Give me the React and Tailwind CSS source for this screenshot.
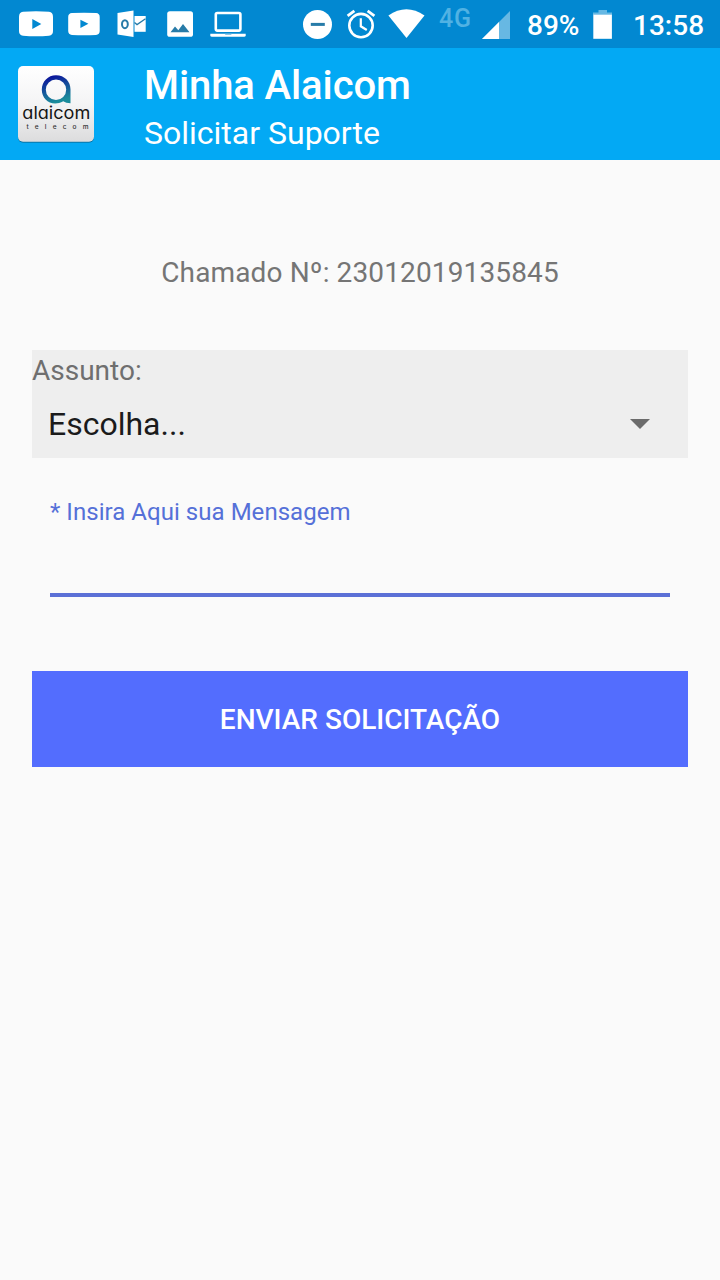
import { useState } from "react";

function StatusBar() {
  return (
    <div className="flex h-12 bg-[#0288d1] text-white">
      <svg className="ml-[18px] h-12 w-[36px]" viewBox="18 0 36 48" fill="currentColor">
        <path
          fillRule="evenodd"
          d="M23 11.8Q36 10.8 49 11.8Q53 12.2 53 17V31Q53 35.3 49 35.8Q36 36.8 23 35.8Q19 35.3 19 31V17Q19 12.2 23 11.8ZM32.3 19V29L41.3 24Z"
        />
      </svg>
      <svg className="ml-[13px] h-12 w-[34px]" viewBox="67 0 34 48" fill="currentColor">
        <path
          fillRule="evenodd"
          d="M72 13Q84 12.4 96 13Q99.7 13.3 99.7 17V31Q99.7 34.5 96 34.9Q84 35.5 72 34.9Q68.2 34.5 68.2 31V17Q68.2 13.3 72 13ZM80.4 19.7V28L88.4 23.8Z"
        />
      </svg>
      {/* outlook */}
      <svg className="ml-[15px] h-12 w-[32px]" viewBox="116 0 32 48">
        <path d="M117.5 13L133.5 10.6V37L117.5 34.6Z" fill="currentColor" />
        <path d="M134.5 16H145.7V31.8H134.5Z" fill="currentColor" />
        <path d="M134.5 22.6L137 24.6L145.5 18.8" fill="none" stroke="#277ba8" strokeWidth="1.3" />
        <ellipse cx="124.9" cy="24.2" rx="2.9" ry="4" fill="none" stroke="#277ba8" strokeWidth="2" />
      </svg>
      <svg className="ml-[18px] h-12 w-[28px]" viewBox="166 0 28 48">
        <rect x="167.2" y="11.2" width="25.8" height="25.6" rx="2.6" fill="currentColor" />
        <path d="M170.5 32.3L175 26.4L178.3 30.2L183 24L189.5 32.3Z" fill="#277ba8" />
      </svg>
      <svg className="ml-[15px] h-12 w-[38px]" viewBox="209 0 38 48">
        <rect x="215.8" y="13" width="24.6" height="17.6" rx="1.5" fill="none" stroke="currentColor" strokeWidth="2.6" />
        <path d="M210.3 33.8H245.7V35.2Q245.7 36.8 244 36.8H212Q210.3 36.8 210.3 35.2Z" fill="currentColor" />
        <path d="M224.5 33.8H232L231 34.8H225.5Z" fill="#6db7de" />
      </svg>

      {/* do not disturb */}
      <svg className="ml-[55px] h-12 w-[32px]" viewBox="302 0 32 48">
        <circle cx="317.5" cy="24.4" r="14.5" fill="currentColor" />
        <rect x="310.8" y="22.9" width="14" height="3" fill="#277ba8" />
      </svg>
      <svg className="ml-[11px] h-12 w-[32px]" viewBox="345 0 32 48" fill="none" stroke="currentColor">
        <circle cx="361" cy="25.6" r="11.7" strokeWidth="2.6" />
        <path d="M347.6 15.8L354.4 10.8M374.4 15.8L367.6 10.8" strokeWidth="2.8" />
        <path d="M360.8 18.2V26.3L366.8 30" strokeWidth="2.2" />
      </svg>
      <svg className="ml-[10px] h-12 w-[40px]" viewBox="387 0 40 48" fill="currentColor">
        <path d="M388.4 15.6Q406.4 2.8 424.5 15.6L406.5 38Z" />
      </svg>
      <span className="ml-[12px] mt-[4px] h-7 w-[33px] text-[25px] leading-[29px] font-medium tracking-[0.8px] whitespace-nowrap text-[#51b2e3]">
        4G
      </span>
      <svg className="ml-[9px] h-12 w-[30px]" viewBox="481 0 30 48">
        <path d="M510 11V39H482Z" fill="#67b8e3" />
        <path d="M499 22V39H482Z" fill="currentColor" />
      </svg>
      <span className="ml-[16px] w-[53px] text-[28px] leading-[51px] font-medium whitespace-nowrap">89%</span>
      <svg className="ml-[12px] h-12 w-[22px]" viewBox="592 0 22 48">
        <path d="M598.5 10H607V12.5H612V15H593V12.5H598.5Z" fill="#67b8e3" />
        <rect x="593.3" y="14.7" width="18.6" height="24.1" fill="currentColor" />
      </svg>
      <span className="ml-[19px] text-[28px] leading-[51px] font-medium whitespace-nowrap">13:58</span>
    </div>
  );
}

function Logo() {
  return (
    <svg className="h-20 w-20 shrink-0" viewBox="16 64 80 80">
      <defs>
        <linearGradient id="tile" x1="0" y1="0" x2="0" y2="1">
          <stop offset="0" stopColor="#ffffff" />
          <stop offset="0.5" stopColor="#f4f4f5" />
          <stop offset="1" stopColor="#dcdcdd" />
        </linearGradient>
        <linearGradient id="ring" x1="0" y1="0" x2="0.3" y2="1">
          <stop offset="0.1" stopColor="#0b129b" />
          <stop offset="0.55" stopColor="#14519b" />
          <stop offset="1" stopColor="#1b8c9b" />
        </linearGradient>
      </defs>
      <rect x="18" y="67.3" width="76" height="75.5" rx="5" fill="#0876a8" />
      <rect x="18" y="66" width="76" height="75.7" rx="5" fill="url(#tile)" />
      <path
        fillRule="evenodd"
        fill="url(#ring)"
        d="M56 75.3C64.5 75.3 70.5 81.5 70.5 89.5V103.3C67.5 103.3 65 102.4 63.3 101.3C52 107.5 41.8 99.8 41.8 89.7C41.8 81.5 48 75.3 56 75.3ZM56 79.6A10.2 10.2 0 1 0 56 100A10.2 10.2 0 1 0 56 79.6Z"
      />
      <text
        x="22.3"
        y="118.8"
        textLength="68"
        lengthAdjust="spacingAndGlyphs"
        className="fill-[#151515] font-[Inter,sans-serif] text-[17px] [font-feature-settings:'cv11']"
      >
        alaicom
      </text>
      <text
        x="26.5"
        y="129"
        textLength="62"
        className="fill-[#333333] font-[Inter,sans-serif] text-[6.5px] font-medium"
      >
        telecom
      </text>
    </svg>
  );
}

function Header() {
  return (
    <header className="flex h-28 bg-[#03a9f4] pt-4 pl-4 text-white">
      <Logo />
      <div className="ml-12">
        <h1 className="text-[40px] leading-[44px] font-medium tracking-[-0.1px]">Minha Alaicom</h1>
        <p className="text-[32px] leading-[50px]">Solicitar Suporte</p>
      </div>
    </header>
  );
}

export default function App() {
  const [message, setMessage] = useState("");

  return (
    <div className="min-h-screen w-full bg-[#fafafa] font-[Roboto,sans-serif]">
      <StatusBar />
      <Header />
      <main className="flex flex-col px-8 pt-[97px]">
        <p className="text-center text-[28px] leading-8 tracking-[0.13px] text-[#757575]">
          Chamado Nº: 23012019135845
        </p>

        <div className="mt-[61px] h-[108px] bg-[#eeeeee]">
          <p className="pt-[5px] text-[28px] leading-8 text-[#6f6f6f]">Assunto:</p>
          <button className="flex h-[71px] w-full items-center justify-between pt-[3px] pr-[38px] pl-4 text-[32px] text-[#1b1b1b]">
            Escolha...
            <svg className="h-[10px] w-5" viewBox="0 0 20 10">
              <path d="M0 0H20L10 10Z" fill="#6b6b6b" />
            </svg>
          </button>
        </div>

        <label className="mx-[18px] mt-[38px] flex flex-col text-[24px] leading-8 tracking-[0.04px] text-[#5570d8]">
          * Insira Aqui sua Mensagem
          <input
            type="text"
            value={message}
            onChange={(e) => setMessage(e.target.value)}
            className="mt-[16px] h-[53px] border-b-4 border-[#5b70d6] text-[32px] text-black outline-none"
          />
        </label>

        <button className="mt-[74px] h-24 bg-[#536dfe] pt-[2px] text-[28px] font-medium text-white">
          ENVIAR SOLICITAÇÃO
        </button>
      </main>
    </div>
  );
}
